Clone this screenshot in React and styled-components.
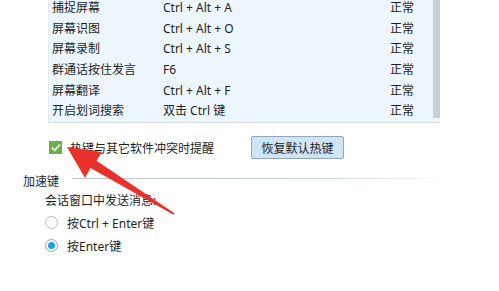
import styled, { createGlobalStyle } from "styled-components";

const GlobalStyle = createGlobalStyle`
  html, body {
    margin: 0;
    padding: 0;
    background: #fff;
  }
  body {
    font-family: "Noto Sans", "Noto Sans CJK SC", sans-serif;
    font-size: 12px;
    color: #1e1e1e;
  }
`;

const Page = styled.div`
  position: relative;
  width: 499px;
  height: 291px;
  overflow: hidden;
`;

const TablePanel = styled.div`
  display: flex;
  margin-left: 48px;
  width: 392px;
  height: 123px;
  background: #edf6fc;
  border-left: 1px solid #e2ebf1;
  border-bottom: 1px solid #d5dde2;
  box-sizing: border-box;
  overflow: hidden;
`;

const Rows = styled.div`
  flex: 1;
  margin-top: -2px;
`;

const Row = styled.div`
  display: flex;
  align-items: center;
  height: 20.6px;
  line-height: 20px;
`;

const Cell = styled.div`
  box-sizing: border-box;
  width: ${(p) => p.$w}px;
  padding-left: ${(p) => p.$pad || 0}px;
  flex: none;
  white-space: nowrap;
`;

const Scrollbar = styled.div`
  width: 7px;
  height: 118px;
  background: #c7d0d5;
  flex: none;
`;

const OptionRow = styled.div`
  display: flex;
  align-items: center;
  height: 23px;
  margin-top: 13px;
  padding-left: 49px;
`;

const CheckBox = styled.span`
  width: 13px;
  height: 13px;
  background: #6ab04a;
  display: flex;
  align-items: center;
  justify-content: center;
  flex: none;
`;

const CheckLabel = styled.span`
  margin-left: 8px;
  width: 181px;
`;

const Button = styled.button`
  width: 93px;
  height: 23px;
  padding: 0;
  background: #cfe5f6;
  border: 1px solid #8fa7b6;
  border-radius: 2px;
  font: inherit;
  color: #1e1e1e;
`;

const SectionHeader = styled.div`
  display: flex;
  align-items: center;
  margin-top: 12px;
  padding-left: 23px;
  height: 20px;
`;

const SectionLine = styled.div`
  margin-left: 13px;
  margin-top: -5px;
  width: 380px;
  height: 1px;
  background: linear-gradient(to right, #b9c3c9 0%, #c9d1d6 65%, rgba(255, 255, 255, 0) 100%);
`;

const SubTitle = styled.div`
  padding-left: 45px;
  height: 20px;
  line-height: 20px;
`;

const RadioRow = styled.div`
  display: flex;
  align-items: center;
  padding-left: 45px;
  height: 23px;
`;

const Radio = styled.span`
  width: 11px;
  height: 11px;
  border-radius: 50%;
  border: 1px solid ${(p) => (p.$on ? "#9aa4aa" : "#b6bdc2")};
  background: #fff;
  display: flex;
  align-items: center;
  justify-content: center;
  flex: none;
  &::after {
    content: "";
    display: ${(p) => (p.$on ? "block" : "none")};
    width: 7px;
    height: 7px;
    border-radius: 50%;
    background: #1aa3ec;
  }
`;

const RadioLabel = styled.span`
  margin-left: 9px;
`;

const Arrow = styled.svg`
  position: absolute;
  left: 0;
  top: 0;
  pointer-events: none;
`;

const hotkeys = [
  ["捕捉屏幕", "Ctrl + Alt + A"],
  ["屏幕识图", "Ctrl + Alt + O"],
  ["屏幕录制", "Ctrl + Alt + S"],
  ["群通话按住发言", "F6"],
  ["屏幕翻译", "Ctrl + Alt + F"],
  ["开启划词搜索", "双击 Ctrl 键"],
];

export default function App() {
  return (
    <Page>
      <GlobalStyle />
      <TablePanel>
        <Rows>
          {hotkeys.map(([name, key]) => (
            <Row key={name}>
              <Cell $w={114} $pad={3}>{name}</Cell>
              <Cell $w={227}>{key}</Cell>
              <Cell $w={40}>正常</Cell>
            </Row>
          ))}
        </Rows>
        <Scrollbar />
      </TablePanel>

      <OptionRow>
        <CheckBox>
          <svg width="10" height="9" viewBox="0 0 10 9">
            <path d="M1 4.6 L3.8 7.3 L9 1.5" fill="none" stroke="#fff" strokeWidth="1.8" />
          </svg>
        </CheckBox>
        <CheckLabel>热键与其它软件冲突时提醒</CheckLabel>
        <Button>恢复默认热键</Button>
      </OptionRow>

      <SectionHeader>
        加速键
        <SectionLine />
      </SectionHeader>
      <SubTitle>会话窗口中发送消息:</SubTitle>
      <RadioRow>
        <Radio />
        <RadioLabel>按Ctrl + Enter键</RadioLabel>
      </RadioRow>
      <RadioRow>
        <Radio $on />
        <RadioLabel>按Enter键</RadioLabel>
      </RadioRow>

      <Arrow width="499" height="291" viewBox="0 0 499 291">
        <polygon
          points="67,147 102,152 96.5,160.8 174.5,213.2 173.5,214.8 90.5,168 85,178"
          fill="#e8312b"
        />
      </Arrow>
    </Page>
  );
}
